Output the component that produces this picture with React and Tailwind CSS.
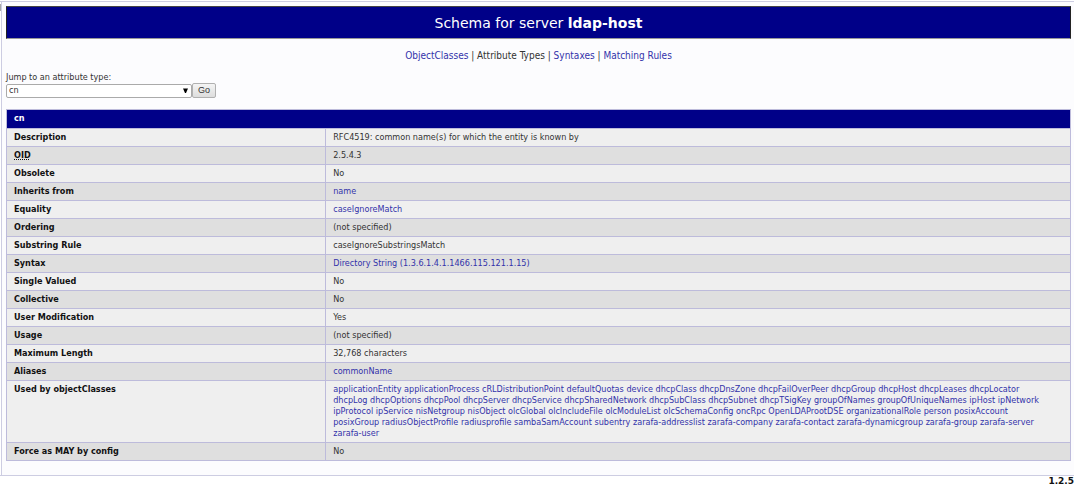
const link = "whitespace-nowrap text-[#3333aa] hover:underline";

const objectClasses =
  "applicationEntity applicationProcess cRLDistributionPoint defaultQuotas device dhcpClass dhcpDnsZone dhcpFailOverPeer dhcpGroup dhcpHost dhcpLeases dhcpLocator dhcpLog dhcpOptions dhcpPool dhcpServer dhcpService dhcpSharedNetwork dhcpSubClass dhcpSubnet dhcpTSigKey groupOfNames groupOfUniqueNames ipHost ipNetwork ipProtocol ipService nisNetgroup nisObject olcGlobal olcIncludeFile olcModuleList olcSchemaConfig oncRpc OpenLDAProotDSE organizationalRole person posixAccount posixGroup radiusObjectProfile radiusprofile sambaSamAccount subentry zarafa-addresslist zarafa-company zarafa-contact zarafa-dynamicgroup zarafa-group zarafa-server zarafa-user".split(
    " "
  );

const rows = [
  { label: "Description", value: "RFC4519: common name(s) for which the entity is known by" },
  { label: "OID", value: "2.5.4.3", abbr: "Object Identifier" },
  { label: "Obsolete", value: "No" },
  { label: "Inherits from", links: ["name"] },
  { label: "Equality", links: ["caseIgnoreMatch"] },
  { label: "Ordering", value: "(not specified)" },
  { label: "Substring Rule", value: "caseIgnoreSubstringsMatch" },
  { label: "Syntax", links: ["Directory String (1.3.6.1.4.1.1466.115.121.1.15)"] },
  { label: "Single Valued", value: "No" },
  { label: "Collective", value: "No" },
  { label: "User Modification", value: "Yes" },
  { label: "Usage", value: "(not specified)" },
  { label: "Maximum Length", value: "32,768 characters" },
  { label: "Aliases", links: ["commonName"] },
  { label: "Used by objectClasses", links: objectClasses },
  { label: "Force as MAY by config", value: "No" },
];

function Links({ items }) {
  return items.map((item, i) => (
    <span key={item}>
      {i > 0 && " "}
      <a href={"#" + encodeURIComponent(item)} className={link}>
        {item}
      </a>
    </span>
  ));
}

function Row({ row }) {
  return (
    <tr className="border-b border-[#bdbbdb] odd:bg-[#efefef] even:bg-[#dfdfdf]">
      <th
        scope="row"
        className="border-r border-[#bdbbdb] px-[7px] py-[3px] text-left align-top font-bold text-[#111]"
      >
        {row.abbr ? (
          <abbr title={row.abbr} className="underline decoration-dotted underline-offset-1">
            {row.label}
          </abbr>
        ) : (
          row.label
        )}
      </th>
      <td className="py-[3px] pr-6 pl-[7px] align-top">
        {row.links ? <Links items={row.links} /> : row.value}
      </td>
    </tr>
  );
}

export default function App() {
  return (
    <div className="bg-white pt-px pr-[6px] font-['DejaVu_Sans_Condensed',Verdana,sans-serif] text-[9px] leading-[11px] text-[#333]">
      <div className="flex border-y border-[#cdcde2]">
        <div className="flex w-px shrink-0 items-start pt-[2px]">
          <div className="h-[7px] w-px bg-[#aaaaaa]" />
        </div>
        <main className="min-w-0 grow border-l border-[#cdcde2] bg-[#fcfcfe] pt-1 pr-[3px] pb-[14px] pl-1">
          <h1 className="border border-x-[#222] border-t-[#444] border-b-[#999] bg-[#000088] pt-[7px] pb-[5px] text-center font-['DejaVu_Sans',Verdana,sans-serif] text-[14px] leading-[19px] text-white">
            Schema for server <strong>ldap-host</strong>
          </h1>
          <nav className="mt-[11px] text-center text-[10px]">
            <a href="#objectclasses" className={link}>ObjectClasses</a>
            {" | Attribute Types | "}
            <a href="#syntaxes" className={link}>Syntaxes</a>
            {" | "}
            <a href="#matching-rules" className={link}>Matching Rules</a>
          </nav>
          <form className="mt-[11px]" onSubmit={(e) => e.preventDefault()}>
            <label htmlFor="attribute" className="block">Jump to an attribute type:</label>
            <div className="flex items-center">
              <div className="grid w-[186px] items-center">
                <select
                  id="attribute"
                  defaultValue="cn"
                  className="col-start-1 row-start-1 h-[14px] appearance-none rounded-xs border border-[#aaa] bg-white px-[2px] leading-[11px]"
                >
                  <option>cn</option>
                  <option>commonName</option>
                </select>
                <svg
                  viewBox="0 0 5 5"
                  aria-hidden="true"
                  className="pointer-events-none col-start-1 row-start-1 mr-1 h-[5px] w-[5px] justify-self-end fill-black"
                >
                  <path d="M0 0.5H5L3 5H2Z" />
                </svg>
              </div>
              <button
                type="submit"
                className="h-[15px] w-6 rounded-xs border border-[#b0b0b0] bg-linear-to-b from-[#f4f4f4] to-[#dddddd] font-['Liberation_Sans',Arial,sans-serif] leading-[11px]"
              >
                Go
              </button>
            </div>
          </form>
          <table className="mt-[11px] w-full table-fixed border-collapse border border-[#bdbbdb]">
            <colgroup>
              <col className="w-[30%]" />
              <col />
            </colgroup>
            <thead>
              <tr className="border-b border-[#bdbbdb] bg-[#000088] text-white">
                <th colSpan="2" scope="colgroup" className="px-[7px] pt-[3px] pb-1 text-left font-bold">
                  cn
                </th>
              </tr>
            </thead>
            <tbody>
              {rows.map((row) => (
                <Row key={row.label} row={row} />
              ))}
            </tbody>
          </table>
        </main>
      </div>
      <footer className="text-right font-['DejaVu_Sans',Verdana,sans-serif] font-bold text-[#111]">1.2.5</footer>
    </div>
  );
}
